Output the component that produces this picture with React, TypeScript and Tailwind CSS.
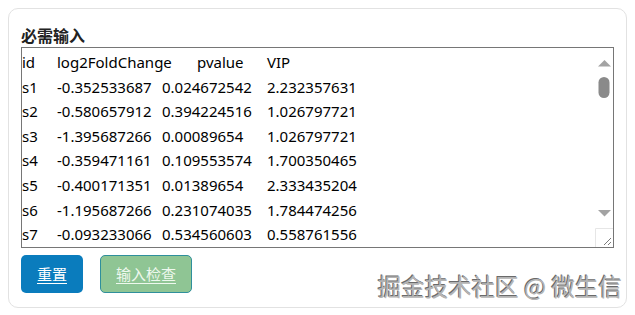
const rows = [
  "id\tlog2FoldChange\tpvalue\tVIP",
  "s1\t-0.352533687\t0.024672542\t2.232357631",
  "s2\t-0.580657912\t0.394224516\t1.026797721",
  "s3\t-1.395687266\t0.00089654\t1.026797721",
  "s4\t-0.359471161\t0.109553574\t1.700350465",
  "s5\t-0.400171351\t0.01389654\t2.333435204",
  "s6\t-1.195687266\t0.231074035\t1.784474256",
  "s7\t-0.093233066\t0.534560603\t0.558761556",
]

function ScrollBar() {
  return (
    <div className="w-[18px] shrink-0">
      <svg width="18" height="199" viewBox="0 0 18 199">
        <polygon points="3,18.5 9.5,12 16,18.5" fill="#a3a3a3" />
        <rect x="3.5" y="29" width="11" height="21" rx="5.5" fill="#8a8a8a" />
        <polygon points="3,162 16,162 9.5,168.5" fill="#a3a3a3" />
        <path d="M0.5 199 V180.5 H18" fill="none" stroke="#e6e6e6" />
        <path d="M16 190 L9 197 M16 194 L13 197" stroke="#7a7a7a" strokeWidth="1" />
      </svg>
    </div>
  )
}

export default function App() {
  return (
    <div className="relative w-[635px] h-[315px] bg-white overflow-hidden font-['Noto_Sans','Noto_Sans_CJK_SC',sans-serif]">
      <div className="m-2 w-[619px] h-[300px] border border-[#e2e2e2] rounded-[10px] pt-[14px] px-3">
        <div className="h-6 leading-6 text-[16px] font-bold text-[#222] font-['Noto_Sans_CJK_SC',sans-serif]">必需输入</div>

        <div className="flex h-[201px] border border-[#767676] bg-white">
          <div className="flex-1 overflow-hidden pt-[2px] text-[15px] leading-[24.6px] text-black whitespace-pre [tab-size:35px]">
            {rows.join("\n")}
          </div>
          <ScrollBar />
        </div>

        <div className="flex gap-[17px] mt-[7px] font-['Noto_Sans_CJK_SC',sans-serif]">
          <button className="flex items-center justify-center w-[62px] h-[38px] rounded-[5px] bg-[#0a7cbd] text-white text-[15px] leading-5">
            <span className="underline underline-offset-[3px]">重置</span>
          </button>
          <button className="flex items-center justify-center w-[92px] h-[38px] rounded-[5px] bg-[#8fc594] border border-[#2f8f9c] text-[#eef8ee] text-[15px] leading-5">
            <span className="underline underline-offset-[3px]">输入检查</span>
          </button>
        </div>
      </div>

      <div className="absolute right-[13px] top-[271px] text-[23.5px] leading-[30px] text-[#b4b4b4] font-['Noto_Sans_CJK_SC',sans-serif] [text-shadow:-1px_-1px_0_#6a6a6a,1px_1px_0_#ffffff]">
        掘金技术社区 @ 微生信
      </div>
    </div>
  )
}
